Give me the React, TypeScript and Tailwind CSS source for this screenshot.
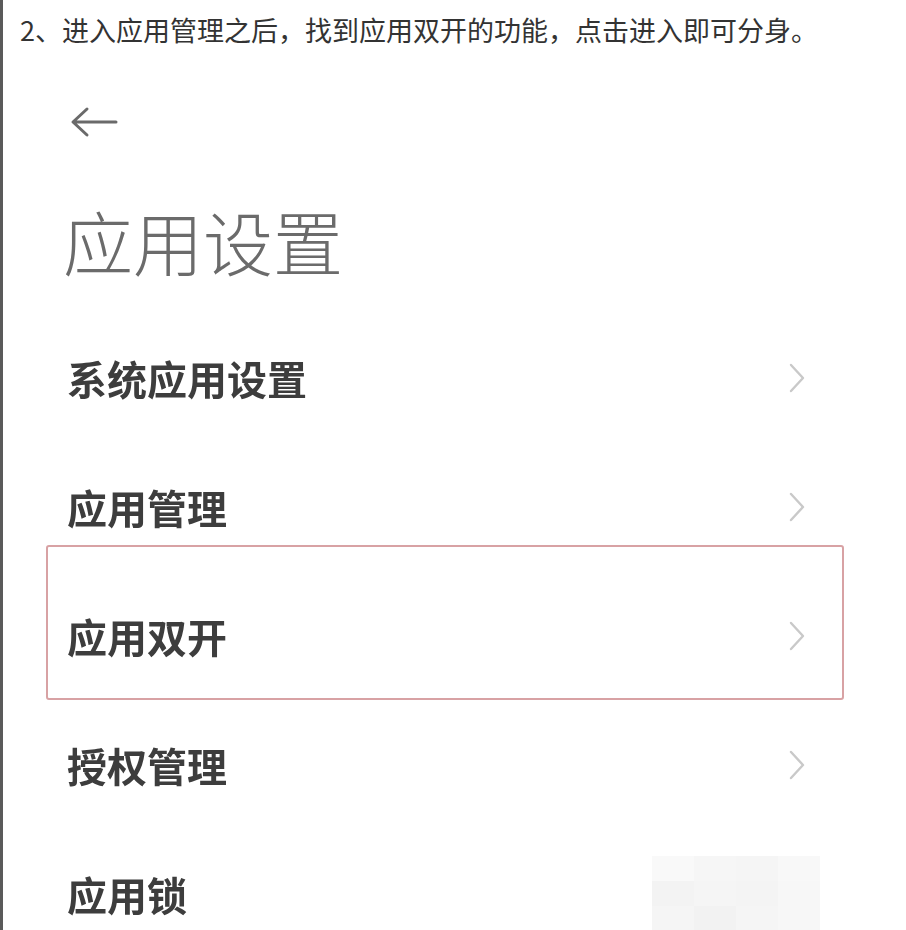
const cjk = "font-['Noto_Sans_CJK_SC','Noto_Sans',sans-serif]";

const Chevron = () => (
  <svg width="18" height="32" viewBox="0 0 18 32" className="mr-[100px]">
    <polyline points="3,3 15,16 3,29" fill="none" stroke="#c9c9c9" strokeWidth="2.4" strokeLinecap="round" strokeLinejoin="round" />
  </svg>
);

const Mosaic = () => {
  const cells = ["#f9f9f9", "#f6f6f6", "#f4f4f4", "#f8f8f8", "#f2f2f2", "#f5f5f5", "#f3f3f3", "#f7f7f7", "#f5f5f5", "#f1f1f1", "#f4f4f4", "#f7f7f7"];
  return (
    <div className="mr-[86px] grid grid-cols-4 w-[168px] h-[76px] opacity-90">
      {cells.map((c, i) => (
        <div key={i} style={{ backgroundColor: c }} />
      ))}
    </div>
  );
};

const Row = ({ label, last }: { label: string; last?: boolean }) => (
  <div className="h-[129px] flex items-center justify-between">
    <span className={`pl-[64px] text-[40px] font-bold text-[#3d3d3d] blur-[0.4px] ${cjk}`}>{label}</span>
    {last ? <Mosaic /> : <Chevron />}
  </div>
);

export default function App() {
  return (
    <div className="h-[930px] w-[906px] overflow-hidden bg-white border-l-[3px] border-[#5a5a5a]">
      <div className={`h-[66px] flex items-center pl-[17px] pb-[5px] text-[27px] text-[#333] ${cjk}`}>
        2、进入应用管理之后，找到应用双开的功能，点击进入即可分身。
      </div>
      <div className="h-[112px] flex items-center pl-[66px]">
        <svg width="50" height="34" viewBox="0 0 50 34">
          <path d="M47 17 H5 M18 4 L4 17 L18 30" fill="none" stroke="#6a6a6a" strokeWidth="3" strokeLinecap="round" strokeLinejoin="round" />
        </svg>
      </div>
      <div className={`h-[135px] flex items-start pl-[60px] pt-[28px] text-[70px] leading-none font-light text-[#6b6b6b] blur-[0.4px] ${cjk}`}>
        应用设置
      </div>
      <div className="relative">
        <Row label="系统应用设置" />
        <Row label="应用管理" />
        <Row label="应用双开" />
        <Row label="授权管理" />
        <Row label="应用锁" last />
        <div className="absolute left-[43px] top-[232px] w-[798px] h-[155px] border-2 border-[#d8a2a4] rounded-[3px] pointer-events-none" />
      </div>
    </div>
  );
}
